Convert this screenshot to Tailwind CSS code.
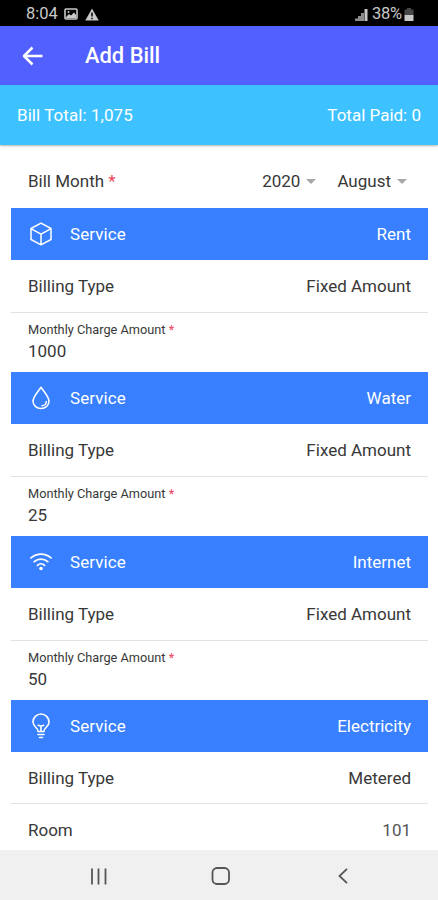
<!DOCTYPE html>
<html lang="en">
<head>
<meta charset="utf-8">
<title>Add Bill</title>
<script src="https://cdn.jsdelivr.net/npm/@tailwindcss/browser@4"></script>
</head>
<body class="bg-white">
<div class="w-[438px] h-[900px] flex flex-col overflow-hidden bg-white font-['Roboto',sans-serif] text-[17px] text-[#383838]">
  <div class="h-[26px] shrink-0 bg-black flex items-center pl-[26px] pr-6 pt-[2px] text-[#c8c8c8] text-[16.500px]">
    <span class="w-[32px] whitespace-nowrap">8:04</span>
    <svg class="ml-[6px] w-[14px] h-[12px]" viewBox="0 0 14 12"><rect x="1" y="1" width="12" height="10" rx="1" fill="none" stroke="#c8c8c8" stroke-width="1.600"/><path d="M2 9l3-3 2 1.500 3-3L12 7v3H2z" fill="#c8c8c8"/><circle cx="4.500" cy="4" r="1" fill="#c8c8c8"/></svg>
    <svg class="ml-[7px] w-[14px] h-[13px]" viewBox="0 0 14 13"><path d="M7 0.500L13.700 12.500H0.300z" fill="#c8c8c8"/><path d="M7 4.500v4M7 9.700v1.500" stroke="#000" stroke-width="1.500"/></svg>
    <svg class="ml-auto w-[13px] h-[13px]" viewBox="0 0 13 13"><path d="M0 13v-2.500h3V13zM3 13V8h3v5zM6 13V5H9v8z" fill="#8c8c8c"/><path d="M9.500 13V1H12.500v12z" fill="#c8c8c8"/></svg>
    <span class="ml-[4px] w-[32px] whitespace-nowrap tracking-[-0.300px]">38%</span>
    <svg class="w-[10px] h-[13px]" viewBox="0 0 10 13"><path d="M3 0h4v1.500h2.500V7h-9V1.500H3z" fill="#484848"/><path d="M0.500 7h9v6h-9z" fill="#c8c8c8"/></svg>
  </div>
  <div class="h-[59px] shrink-0 bg-[#5260ff] flex items-center text-white">
    <svg class="ml-[22px] w-[21px] h-[20px]" viewBox="0 0 21 20" fill="none" stroke="#fff" stroke-width="2.500" stroke-linejoin="round"><path d="M10.500 1.500L2 10l8.500 8.500M2 10h18.500"/></svg>
    <h1 class="ml-[42px] pt-[2px] text-[21.900px] font-medium">Add Bill</h1>
  </div>
  <div class="h-[60px] shrink-0 bg-[#3dc2ff] flex items-center justify-between pl-[17px] pr-[17px] pt-[2px] text-white shadow-[0_1px_2px_rgba(0,0,0,0.3)]">
    <span class="tracking-[0.060px]">Bill Total: 1,075</span><span>Total Paid: 0</span>
  </div>
  <main class="h-[705px] shrink-0 pl-[11px] pr-[10px] overflow-hidden">
    <div class="h-[63px] flex items-center pl-[17px] pr-[21px] pt-[9px]">
      <span class="pt-[2px]">Bill Month <span class="text-[#eb445a]">*</span></span>
      <span class="ml-auto pt-px">2020</span>
      <svg class="ml-[6px] w-[10px] h-[5px]" viewBox="0 0 10 5"><path d="M0 0h10L5 5z" fill="#a8a8a8"/></svg>
      <span class="ml-[21px] pt-px">August</span>
      <svg class="ml-[6px] w-[10px] h-[5px]" viewBox="0 0 10 5"><path d="M0 0h10L5 5z" fill="#a8a8a8"/></svg>
    </div>
    <section class="h-[164px]">
      <div class="h-[52px] bg-[#3880ff] text-white flex items-center pl-[18px] pr-[17px]">
        <svg class="w-6 h-6" viewBox="0 0 24 24" fill="none" stroke="#fff" stroke-width="1.500" stroke-linejoin="round" stroke-linecap="round"><path d="M12 1.200L22 6.500v11L12 22.800 2 17.500v-11zM2.400 6.800L12 12.200l9.600-5.400M12 12.200v10.300"/></svg>
        <span class="ml-[17px] pt-px tracking-[0.080px]">Service</span><span class="ml-auto pt-px">Rent</span>
      </div>
      <div class="h-[53px] pt-[2px] border-b border-[#e2e2e2] flex items-center justify-between px-[17px]"><span>Billing Type</span><span>Fixed Amount</span></div>
      <div class="h-[59px] pl-[17px] pt-[9px]">
        <div class="text-[12.750px] leading-[16px]">Monthly Charge Amount <span class="text-[#eb445a]">*</span></div>
        <div class="mt-[2px] leading-[22px]">1000</div>
      </div>
    </section>
    <section class="h-[164px]">
      <div class="h-[52px] bg-[#3880ff] text-white flex items-center pl-[18px] pr-[17px]">
        <svg class="w-6 h-6" viewBox="0 0 24 24" fill="none" stroke="#fff" stroke-width="1.600" stroke-linejoin="round" stroke-linecap="round"><path d="M12 1.300C9 5.500 4 10.800 4 15c0 4.300 3.500 7.500 8 7.500s8-3.200 8-7.500C20 10.800 15 5.500 12 1.300z"/><path d="M17.300 15.500c0 2.400-1.900 4.300-4.300 4.300"/></svg>
        <span class="ml-[17px] pt-px tracking-[0.080px]">Service</span><span class="ml-auto pt-px">Water</span>
      </div>
      <div class="h-[53px] pt-[2px] border-b border-[#e2e2e2] flex items-center justify-between px-[17px]"><span>Billing Type</span><span>Fixed Amount</span></div>
      <div class="h-[59px] pl-[17px] pt-[9px]">
        <div class="text-[12.750px] leading-[16px]">Monthly Charge Amount <span class="text-[#eb445a]">*</span></div>
        <div class="mt-[2px] leading-[22px]">25</div>
      </div>
    </section>
    <section class="h-[164px]">
      <div class="h-[52px] bg-[#3880ff] text-white flex items-center pl-[18px] pr-[17px]">
        <svg class="w-6 h-6" viewBox="0 0 24 24" fill="none" stroke="#fff" stroke-width="1.800" stroke-linecap="round"><path d="M2 7.900c5.700-5 14.300-5 20 0M5.200 11.700c3.900-3.500 9.700-3.500 13.600 0M8.500 15.300c2-1.900 5-1.900 7 0"/><circle cx="12" cy="18.500" r="1.800" fill="#fff" stroke="none"/></svg>
        <span class="ml-[17px] pt-px tracking-[0.080px]">Service</span><span class="ml-auto pt-px">Internet</span>
      </div>
      <div class="h-[53px] pt-[2px] border-b border-[#e2e2e2] flex items-center justify-between px-[17px]"><span>Billing Type</span><span>Fixed Amount</span></div>
      <div class="h-[59px] pl-[17px] pt-[9px]">
        <div class="text-[12.750px] leading-[16px]">Monthly Charge Amount <span class="text-[#eb445a]">*</span></div>
        <div class="mt-[2px] leading-[22px]">50</div>
      </div>
    </section>
    <section>
      <div class="h-[52px] bg-[#3880ff] text-white flex items-center pl-[18px] pr-[17px]">
        <svg class="w-6 h-[26px]" viewBox="0 0 24 26" fill="none" stroke="#fff" stroke-width="1.600" stroke-linecap="round" stroke-linejoin="round"><path d="M9 18.500c0-2-.9-3-2.500-4.500A7.400 7.400 0 0 1 4 9a8 8 0 0 1 16 0c0 2-.9 3.700-2.500 5-1.600 1.500-2.500 2.500-2.500 4.500zM12 18.500v-5.500M9.300 12.300c1.800.9 3.600.9 5.400 0M9 21.500h6M10.500 24.500h3"/></svg>
        <span class="ml-[17px] pt-px tracking-[0.080px]">Service</span><span class="ml-auto pt-px">Electricity</span>
      </div>
      <div class="h-[52px] pt-[2px] border-b border-[#e2e2e2] flex items-center justify-between px-[17px]"><span>Billing Type</span><span>Metered</span></div>
      <div class="h-[52px] pt-px flex items-center justify-between px-[17px]"><span>Room</span><span class="text-[#555]">101</span></div>
    </section>
  </main>
  <div class="h-[50px] shrink-0 bg-[#f0f0f0] flex items-center pt-[2px]">
    <svg class="ml-[90px] w-[17px] h-[17px]" viewBox="0 0 17 17" stroke="#555" stroke-width="1.800"><path d="M2 0.500v16M8.500 0.500v16M15.500 0.500v16"/></svg>
    <svg class="ml-[104px] w-[19px] h-[18px]" viewBox="0 0 19 18" fill="none" stroke="#555" stroke-width="1.800"><rect x="1.500" y="1" width="16.500" height="16" rx="4.500"/></svg>
    <svg class="ml-[108px] w-[10px] h-[16px]" viewBox="0 0 10 16" fill="none" stroke="#555" stroke-width="1.800"><path d="M9 0.800L1.500 8 9 15.200"/></svg>
  </div>
</div>
</body>
</html>
